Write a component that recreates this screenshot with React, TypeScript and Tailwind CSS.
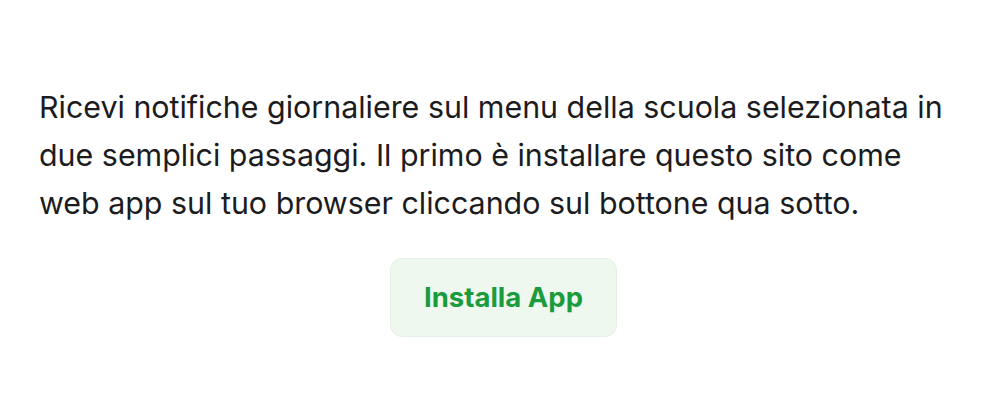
import React from 'react'

const App = () => {
    return (
        <div className="w-[986px] h-[400px] bg-white font-['Inter',sans-serif] text-[#1c1c1e]">
            <div className="pl-[39px] pr-[18px] pt-[83px] flex flex-col">
                <p className="text-[30.4px] leading-[48px]">
                    Ricevi notifiche giornaliere sul menu della scuola selezionata in due semplici passaggi. Il primo è installare questo sito come web app sul tuo browser cliccando sul bottone qua sotto.
                </p>
                <div className="flex justify-center mt-[31px]">
                    <button className="w-[227px] h-[79px] rounded-xl bg-[#eff8ef] border border-[#e6efe6] text-[#1a9b3e] text-[27.5px] font-bold">
                        Installa App
                    </button>
                </div>
            </div>
        </div>
    )
}

export default App
